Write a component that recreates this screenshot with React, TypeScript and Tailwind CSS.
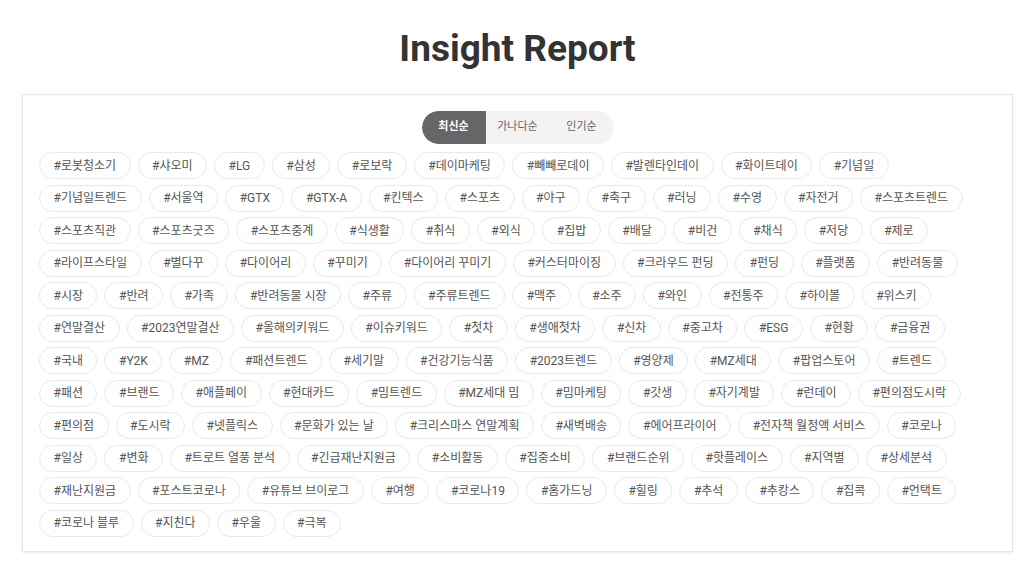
import { useState } from 'react';

const TAGS = [
  '로봇청소기', '샤오미', 'LG', '삼성', '로보락', '데이마케팅', '빼빼로데이', '발렌타인데이', '화이트데이', '기념일',
  '기념일트렌드', '서울역', 'GTX', 'GTX-A', '킨텍스', '스포츠', '야구', '축구', '러닝', '수영', '자전거', '스포츠트렌드',
  '스포츠직관', '스포츠굿즈', '스포츠중계', '식생활', '취식', '외식', '집밥', '배달', '비건', '채식', '저당', '제로',
  '라이프스타일', '별다꾸', '다이어리', '꾸미기', '다이어리 꾸미기', '커스터마이징', '크라우드 펀딩', '펀딩', '플랫폼', '반려동물',
  '시장', '반려', '가족', '반려동물 시장', '주류', '주류트렌드', '맥주', '소주', '와인', '전통주', '하이볼', '위스키',
  '연말결산', '2023연말결산', '올해의키워드', '이슈키워드', '첫차', '생애첫차', '신차', '중고차', 'ESG', '현황', '금융권',
  '국내', 'Y2K', 'MZ', '패션트렌드', '세기말', '건강기능식품', '2023트렌드', '영양제', 'MZ세대', '팝업스토어', '트렌드',
  '패션', '브랜드', '애플페이', '현대카드', '밈트렌드', 'MZ세대 밈', '밈마케팅', '갓생', '자기계발', '런데이', '편의점도시락',
  '편의점', '도시락', '넷플릭스', '문화가 있는 날', '크리스마스 연말계획', '새벽배송', '에어프라이어', '전자책 월정액 서비스', '코로나',
  '일상', '변화', '트로트 열풍 분석', '긴급재난지원금', '소비활동', '집중소비', '브랜드순위', '핫플레이스', '지역별', '상세분석',
  '재난지원금', '포스트코로나', '유튜브 브이로그', '여행', '코로나19', '홈가드닝', '힐링', '추석', '추캉스', '집콕', '언택트',
  '코로나 블루', '지친다', '우울', '극복',
];

const SORTS = ['최신순', '가나다순', '인기순'];

export default function App() {
  const [sort, setSort] = useState(0);

  return (
    <div className="min-h-screen bg-white font-['Roboto','Noto_Sans_CJK_KR',sans-serif]">
      <h1 className="pt-[28px] text-center text-[37px] font-bold leading-[42px] text-[#333]">
        Insight Report
      </h1>

      <div className="mx-[22px] mt-[24px] border border-[#e6e6e6] px-[16px] pt-[16px] pb-[14px] shadow-[0_1px_2px_rgba(0,0,0,0.08)]">
        <div className="flex justify-center">
          <div className="flex h-[33px] overflow-hidden rounded-full bg-[#f3f3f3]">
            {SORTS.map((label, i) => (
              <button
                key={label}
                onClick={() => setSort(i)}
                className={
                  i === sort
                    ? 'w-[64px] rounded-l-full bg-[#666] text-[11px] font-bold text-white'
                    : 'w-[64px] text-[11px] text-[#666]'
                }
              >
                {label}
              </button>
            ))}
          </div>
        </div>

        <div className="mt-[8px] flex flex-wrap gap-x-[7px] gap-y-[5.5px]">
          {TAGS.map((tag) => (
            <span
              key={tag}
              className="flex h-[27px] items-center rounded-full border border-[#e8e8e8] px-[13.5px] text-[12px] text-[#555]"
            >
              #{tag}
            </span>
          ))}
        </div>
      </div>
    </div>
  );
}
